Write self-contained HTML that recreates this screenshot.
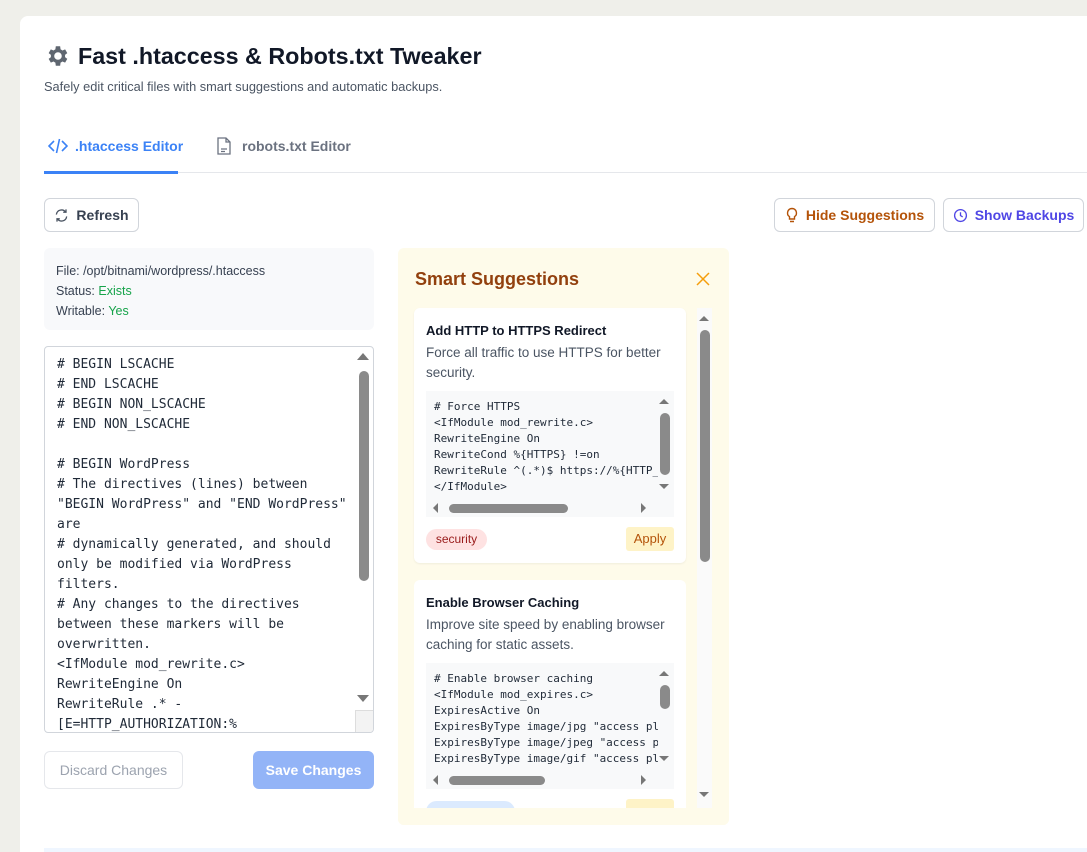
<!DOCTYPE html>
<html style="height:852px;overflow:hidden"><head><meta charset="utf-8"><style>
*{box-sizing:border-box;margin:0;padding:0}
body{width:1087px;height:852px;overflow:hidden;background:#efefea;font-family:"Liberation Sans",sans-serif;position:relative}
.card{position:absolute;left:20px;top:16px;width:1067px;height:836px;background:#fff;border-radius:8px 0 0 0}
.abs{position:absolute}
.btn{position:absolute;height:34px;border:1px solid #d1d5db;border-radius:6px;background:#fff;font-size:14px;font-weight:bold;display:flex;align-items:center;justify-content:center;gap:7px}
.mono{font-family:"DejaVu Sans Mono",monospace}
.vs{position:absolute;background:#8a8a8a;border-radius:6px}
.tri{position:absolute;width:0;height:0}
</style></head><body>
<div class="card"></div>
<svg class="abs" style="left:44px;top:43px" width="26" height="26" viewBox="0 0 24 24"><path fill="#5f6670" d="M19.4 13a7.5 7.5 0 0 0 0-2l2.1-1.6-2-3.5-2.5 1a7.6 7.6 0 0 0-1.7-1L14.9 3h-4l-.4 2.9a7.6 7.6 0 0 0-1.7 1l-2.5-1-2 3.5L6.4 11a7.5 7.5 0 0 0 0 2l-2.1 1.6 2 3.5 2.5-1a7.6 7.6 0 0 0 1.7 1l.4 2.9h4l.4-2.9a7.6 7.6 0 0 0 1.7-1l2.5 1 2-3.5zM12.9 15.5a3.5 3.5 0 1 1 0-7 3.5 3.5 0 0 1 0 7z"/></svg>
<div class="abs" style="left:78px;top:43px;font-size:23.3px;font-weight:bold;color:#111827">Fast .htaccess &amp; Robots.txt Tweaker</div>
<div class="abs" style="left:44px;top:79px;font-size:12.8px;color:#4b5563">Safely edit critical files with smart suggestions and automatic backups.</div>
<svg class="abs" style="left:48px;top:138px" width="20" height="16" viewBox="0 0 20 16"><path d="M6 3 1 8l5 5M14 3l5 5-5 5M11.5 1 8.5 15" stroke="#3b82f6" stroke-width="1.6" fill="none"/></svg>
<div class="abs" style="left:75px;top:138px;font-size:14px;font-weight:bold;color:#3b82f6">.htaccess Editor</div>
<svg class="abs" style="left:216px;top:137px" width="16" height="18" viewBox="0 0 16 18"><path d="M2 1h8l4 4v12H2z M10 1v4h4 M5 12h6M5 14.5h4" stroke="#6b7280" stroke-width="1.3" fill="none"/></svg>
<div class="abs" style="left:242px;top:138px;font-size:14px;font-weight:bold;color:#6b7280">robots.txt Editor</div>
<div class="abs" style="left:44px;top:172px;width:1043px;height:1px;background:#e5e7eb"></div>
<div class="abs" style="left:44px;top:171px;width:134px;height:3px;background:#3b82f6"></div>
<div class="btn" style="left:44px;top:198px;width:95px;color:#374151"><svg width="15" height="15" viewBox="0 0 16 16"><path d="M2.5 7a5.5 5.5 0 0 1 10-2.5M13.5 9a5.5 5.5 0 0 1-10 2.5M12.8 1.5v3h-3M3.2 14.5v-3h3" stroke="#4b5563" stroke-width="1.4" fill="none"/></svg>Refresh</div>
<div class="btn" style="left:774px;top:198px;width:161px;color:#b45309"><svg width="14" height="16" viewBox="0 0 14 16"><path d="M7 1.5a4.5 4.5 0 0 0-2.5 8.2V12h5V9.7A4.5 4.5 0 0 0 7 1.5zM5 14.5h4" stroke="#b45309" stroke-width="1.4" fill="none"/></svg>Hide Suggestions</div>
<div class="btn" style="left:943px;top:198px;width:141px;color:#4f46e5"><svg width="15" height="15" viewBox="0 0 16 16"><circle cx="8" cy="8" r="6.3" stroke="#4f46e5" stroke-width="1.4" fill="none"/><path d="M8 4.5V8l2.3 1.5" stroke="#4f46e5" stroke-width="1.4" fill="none"/></svg>Show Backups</div>
<div class="abs" style="left:44px;top:248px;width:330px;height:82px;background:#f8f9fb;border-radius:6px;padding:13px 12px;font-size:12.5px;line-height:20px;color:#374151">File: /opt/bitnami/wordpress/.htaccess<br>Status: <span style="color:#16a34a">Exists</span><br>Writable: <span style="color:#16a34a">Yes</span></div>
<div class="abs" style="left:44px;top:346px;width:330px;height:387px;border:1px solid #d1d5db;border-radius:4px;overflow:hidden">
<div class="mono" style="position:absolute;left:12px;top:8px;font-size:13px;line-height:20px;color:#1f2937;white-space:pre"># BEGIN LSCACHE
# END LSCACHE
# BEGIN NON_LSCACHE
# END NON_LSCACHE

# BEGIN WordPress
# The directives (lines) between
"BEGIN WordPress" and "END WordPress"
are
# dynamically generated, and should
only be modified via WordPress
filters.
# Any changes to the directives
between these markers will be
overwritten.
&lt;IfModule mod_rewrite.c&gt;
RewriteEngine On
RewriteRule .* -
[E=HTTP_AUTHORIZATION:%</div>
<div class="tri" style="left:312px;top:6px;border:6px solid transparent;border-bottom:7px solid #777;border-top:0"></div>
<div class="vs" style="left:314px;top:24px;width:10px;height:210px"></div>
<div class="tri" style="left:312px;top:348px;border:6px solid transparent;border-top:7px solid #777;border-bottom:0"></div>
<div style="position:absolute;left:310px;top:363px;width:20px;height:24px;background:#f3f3f3;border-left:1px solid #ddd;border-top:1px solid #ddd"></div>
</div>
<div class="btn" style="left:44px;top:751px;width:139px;height:38px;border-color:#e5e7eb;color:#9ca3af;font-weight:normal;font-size:14px">Discard Changes</div>
<div class="btn" style="left:253px;top:751px;width:121px;height:38px;border:0;background:#93b4f7;color:#fff">Save Changes</div>
<div class="abs" style="left:398px;top:248px;width:331px;height:577px;background:#fefbea;border-radius:6px;overflow:hidden">
<div class="abs" style="left:17px;top:21px;font-size:18px;font-weight:bold;color:#92400e">Smart Suggestions</div>
<svg class="abs" style="left:298px;top:24px" width="14" height="14" viewBox="0 0 14 14"><path d="M1 1l12 12M13 1 1 13" stroke="#f59e0b" stroke-width="1.5"/></svg>
<div class="abs" style="left:299px;top:60px;width:15px;height:500px;background:#fafafa"></div>
<div class="tri" style="left:301px;top:68px;border:5px solid transparent;border-bottom:5px solid #777;border-top:0"></div>
<div class="vs" style="left:302px;top:82px;width:10px;height:232px"></div>
<div class="tri" style="left:301px;top:544px;border:5px solid transparent;border-top:5px solid #777;border-bottom:0"></div>
<div class="abs" style="left:16px;top:60px;width:272px;height:255px;background:#fff;border-radius:6px;box-shadow:0 1px 2px rgba(0,0,0,.06)">
<div class="abs" style="left:12px;top:15px;font-size:13px;font-weight:bold;color:#111827">Add HTTP to HTTPS Redirect</div>
<div class="abs" style="left:12px;top:35px;width:255px;font-size:13.5px;line-height:20px;color:#4b5563">Force all traffic to use HTTPS for better security.</div>
<div class="abs" style="left:12px;top:83px;width:248px;height:126px;background:#f8f9fa;overflow:hidden">
<div class="mono" style="position:absolute;left:8px;top:8px;font-size:11px;line-height:16px;color:#1f2937;white-space:pre"># Force HTTPS
&lt;IfModule mod_rewrite.c&gt;
RewriteEngine On
RewriteCond %{HTTPS} !=on
RewriteRule ^(.*)$ https://%{HTTP_
&lt;/IfModule&gt;</div>
<div style="position:absolute;left:0;top:106px;width:248px;height:20px;background:#f8f9fa"></div>
<div style="position:absolute;left:232px;top:0;width:16px;height:106px;background:#f8f9fa"></div>
<div class="tri" style="left:233px;top:8px;border:5px solid transparent;border-bottom:5px solid #777;border-top:0"></div>
<div class="vs" style="left:234px;top:22px;width:10px;height:62px"></div>
<div class="tri" style="left:233px;top:93px;border:5px solid transparent;border-top:5px solid #777;border-bottom:0"></div>
<div class="tri" style="left:7px;top:112px;border:5px solid transparent;border-right:5px solid #777;border-left:0"></div>
<div class="vs" style="left:23px;top:113px;width:119px;height:9px"></div>
<div class="tri" style="left:215px;top:112px;border:5px solid transparent;border-left:5px solid #777;border-right:0"></div>
</div>
<div class="abs" style="left:12px;top:221px;width:61px;height:21px;border-radius:11px;background:#fee2e2;color:#991b1b;font-size:12px;line-height:21px;text-align:center">security</div>
<div class="abs" style="left:212px;top:219px;width:48px;height:24px;border-radius:3px;background:#fef3c7;color:#b45309;font-size:13px;line-height:24px;text-align:center">Apply</div>
</div>
<div class="abs" style="left:16px;top:332px;width:272px;height:255px;background:#fff;border-radius:6px">
<div class="abs" style="left:12px;top:15px;font-size:13px;font-weight:bold;color:#111827">Enable Browser Caching</div>
<div class="abs" style="left:12px;top:35px;width:262px;font-size:13.5px;line-height:20px;color:#4b5563">Improve site speed by enabling browser caching for static assets.</div>
<div class="abs" style="left:12px;top:83px;width:248px;height:126px;background:#f8f9fa;overflow:hidden">
<div class="mono" style="position:absolute;left:8px;top:8px;font-size:11px;line-height:16px;color:#1f2937;white-space:pre"># Enable browser caching
&lt;IfModule mod_expires.c&gt;
ExpiresActive On
ExpiresByType image/jpg "access pl
ExpiresByType image/jpeg "access p
ExpiresByType image/gif "access pl
ExpiresByType image/png "access pl</div>
<div style="position:absolute;left:0;top:106px;width:248px;height:20px;background:#f8f9fa"></div>
<div style="position:absolute;left:232px;top:0;width:16px;height:106px;background:#f8f9fa"></div>
<div class="tri" style="left:233px;top:8px;border:5px solid transparent;border-bottom:5px solid #777;border-top:0"></div>
<div class="vs" style="left:234px;top:22px;width:10px;height:24px"></div>
<div class="tri" style="left:233px;top:93px;border:5px solid transparent;border-top:5px solid #777;border-bottom:0"></div>
<div class="tri" style="left:7px;top:112px;border:5px solid transparent;border-right:5px solid #777;border-left:0"></div>
<div class="vs" style="left:23px;top:113px;width:96px;height:9px"></div>
<div class="tri" style="left:215px;top:112px;border:5px solid transparent;border-left:5px solid #777;border-right:0"></div>
</div>
<div class="abs" style="left:12px;top:221px;width:89px;height:21px;border-radius:11px;background:#dbeafe"></div>
<div class="abs" style="left:212px;top:219px;width:48px;height:24px;border-radius:3px;background:#fef3c7"></div>
</div>
<div class="abs" style="left:0;top:560px;width:331px;height:17px;background:#fefbea"></div>
</div>
<div class="abs" style="left:44px;top:848px;width:1043px;height:4px;background:#eff6ff"></div>
</body></html>
